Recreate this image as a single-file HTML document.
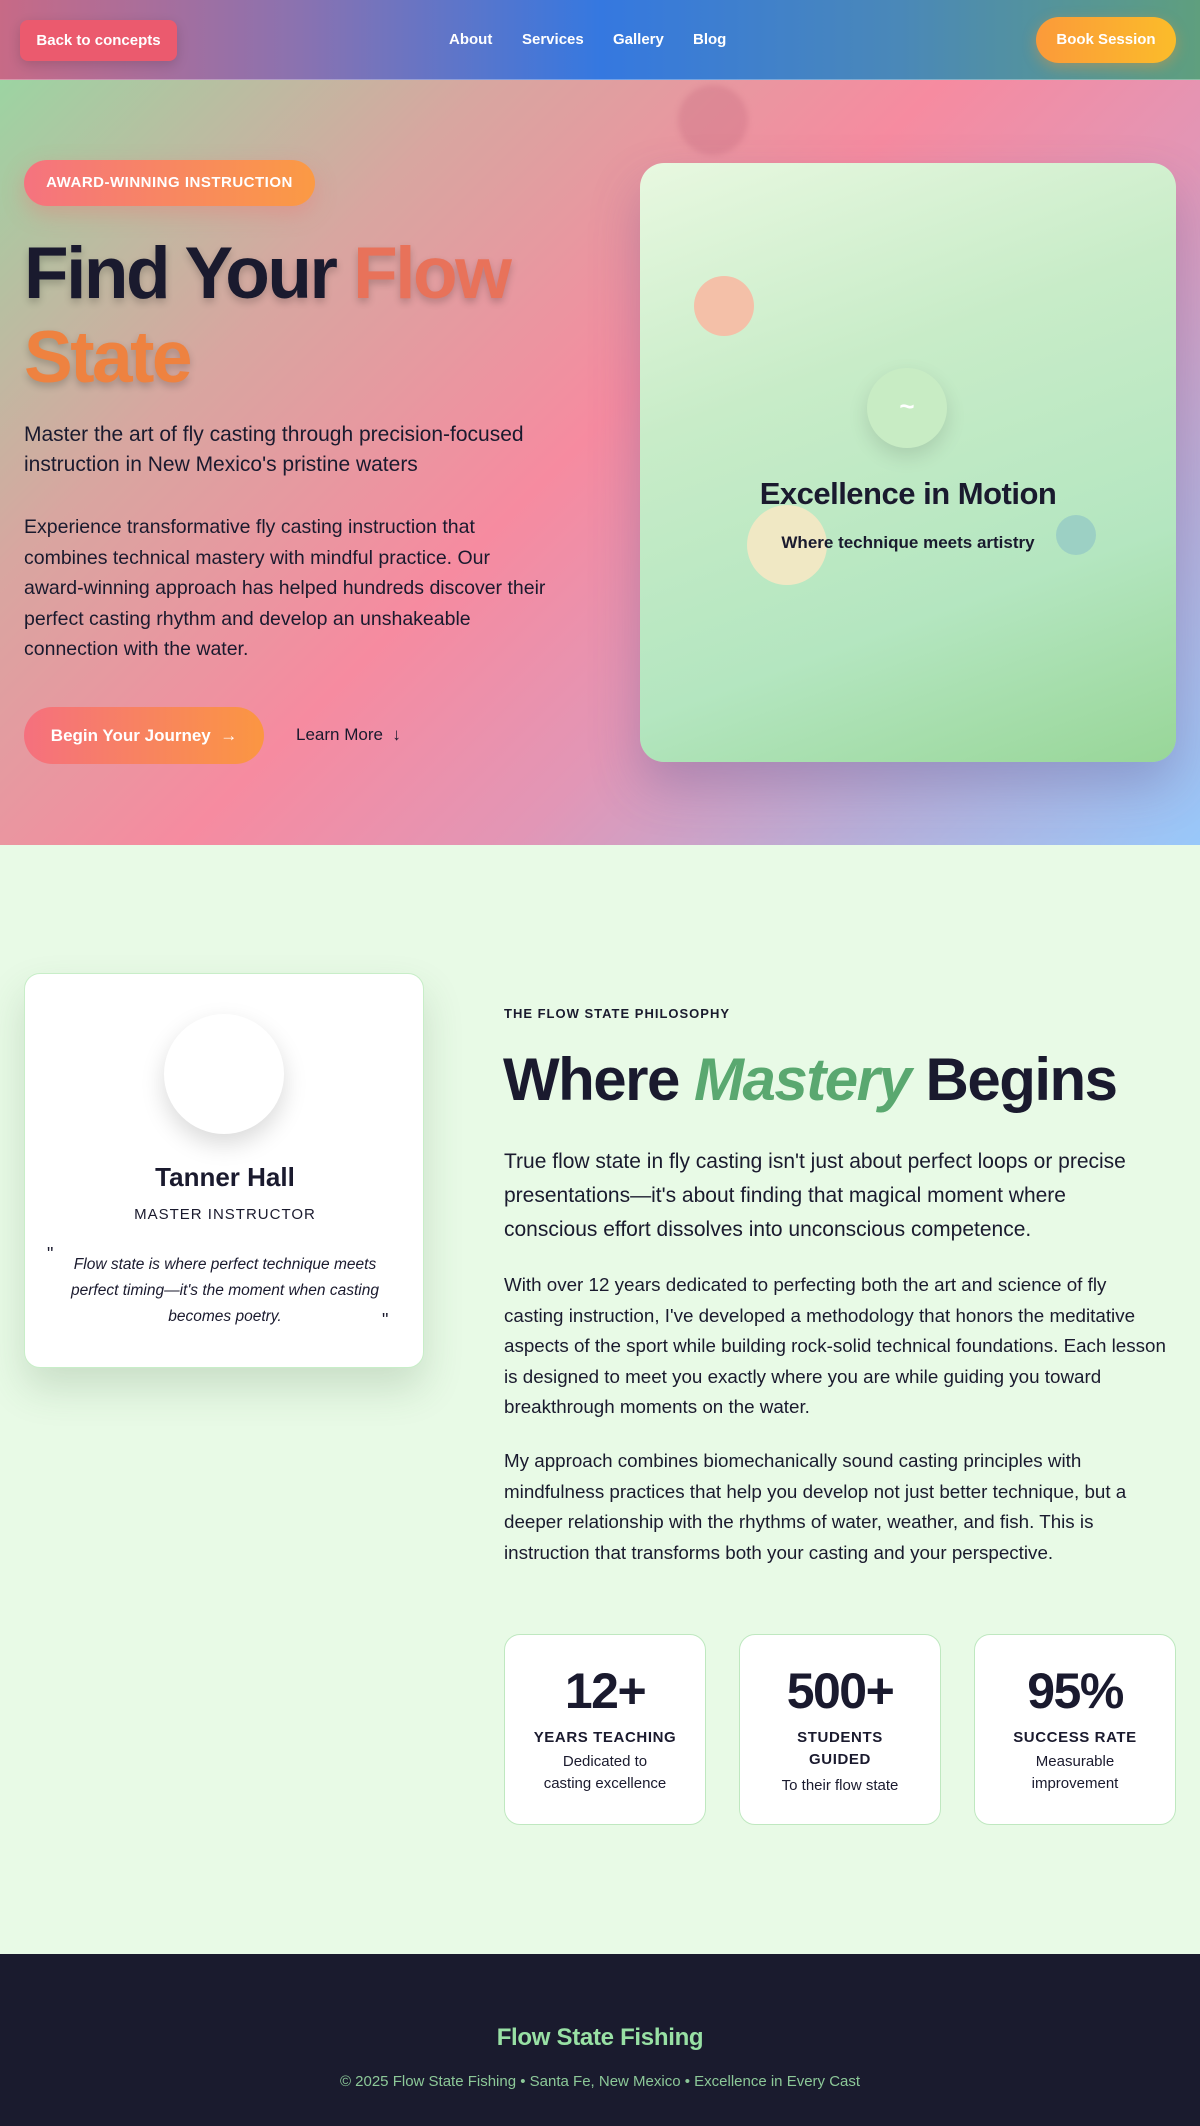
<!DOCTYPE html>
<html><head><meta charset="utf-8"><style>
*{margin:0;padding:0;box-sizing:border-box}
body{width:1200px;height:2126px;font-family:"Liberation Sans",sans-serif;color:#1a1a2e;overflow:hidden;background:#e8fae6}
.nav{position:absolute;left:0;top:0;width:1200px;height:80px;background:linear-gradient(90deg,#c76a86 0%,#8a72b0 25%,#3578e0 50%,#4a88b8 75%,#5f9f7e 100%);border-bottom:1px solid rgba(255,255,255,.3)}
.back{position:absolute;left:20px;top:20px;width:157px;height:41px;border-radius:8px;background:#eb5a6e;color:#fff;font-size:15px;font-weight:bold;line-height:41px;text-align:center;box-shadow:0 4px 12px rgba(0,0,0,.15)}
.links{position:absolute;top:31px;left:449px;font-size:15px;font-weight:bold;color:#fff}
.links span{position:absolute;white-space:nowrap}
.book{position:absolute;left:1036px;top:17px;width:140px;height:46px;border-radius:23px;background:linear-gradient(90deg,#fb9a3a,#fbbc2a);color:#fff;font-size:15px;font-weight:bold;line-height:46px;text-align:center;box-shadow:0 4px 14px rgba(251,150,50,.4)}
.hero{position:absolute;left:0;top:80px;width:1200px;height:765px;overflow:hidden;background:linear-gradient(135deg,#9cd4a2 0%,#d8a6a0 25%,#f68ba0 48%,#e296b6 65%,#b8aed8 82%,#98c8fa 100%)}
.badge{position:absolute;left:24px;top:80px;width:291px;height:46px;border-radius:23px;background:linear-gradient(90deg,#f5737f,#fb9a44);color:#fff;font-size:15px;font-weight:bold;letter-spacing:.5px;line-height:46px;text-align:center;box-shadow:0 8px 22px rgba(245,110,110,.35)}
h1{position:absolute;left:24px;top:152px;font-size:73px;line-height:84px;font-weight:bold;letter-spacing:-2.5px;color:#1a1a2e;text-shadow:0 4px 8px rgba(0,0,0,.2)}
h1 .a{color:#e8725a}h1 .b{color:#ee8240}
.sub{position:absolute;left:24px;top:340px;width:540px;font-size:21px;line-height:30px;color:#1a1a2e}
.para{position:absolute;left:24px;top:432px;width:525px;font-size:19.5px;line-height:30.6px;color:#1a1a2e}
.begin{position:absolute;left:24px;top:627px;width:240px;height:57px;border-radius:29px;background:linear-gradient(90deg,#f5707e,#fb9642);color:#fff;font-size:17px;font-weight:bold;line-height:57px;text-align:center}
.learn{position:absolute;left:296px;top:645px;font-size:17px;color:#1a1a2e}
.card{position:absolute;left:640px;top:83px;width:536px;height:599px;border-radius:24px;background:linear-gradient(160deg,#e8f8e0 0%,#c8ecc8 35%,#b4e6c0 70%,#98d698 100%);box-shadow:0 24px 50px rgba(80,80,140,.3)}
.dot{position:absolute;border-radius:50%}
.sec{position:absolute;left:0;top:845px;width:1200px;height:1109px;background:#e8fae6}
.pcard{position:absolute;left:24px;top:128px;width:400px;height:395px;background:#fff;border-radius:16px;border:1px solid #c8eec8;box-shadow:0 20px 40px rgba(60,100,60,.18)}
.stat{position:absolute;top:789px;width:202px;height:191px;background:#fff;border:1px solid #bfe8c0;border-radius:16px;text-align:center}
.stat .n{font-size:50px;font-weight:bold;letter-spacing:-1.5px;margin-top:28px;line-height:56px}
.stat .l{font-size:15px;font-weight:bold;letter-spacing:.6px;margin-top:8px;line-height:22px}
.stat .d{font-size:15px;line-height:22px;margin-top:2px}
.foot{position:absolute;left:0;top:1954px;width:1200px;height:172px;background:#1a1b2e;text-align:center}
</style></head><body>
<div class="nav">
<div class="back">Back to concepts</div>
<div class="links"><span style="left:0">About</span><span style="left:73px">Services</span><span style="left:164px">Gallery</span><span style="left:244px">Blog</span></div>
<div class="book">Book Session</div>
</div>
<div class="hero">
<div class="dot" style="left:678px;top:5px;width:70px;height:70px;background:rgba(200,110,130,.35);filter:blur(3px)"></div>
<div class="badge">AWARD-WINNING INSTRUCTION</div>
<h1>Find Your <span class="a">Flow</span><br><span class="b">State</span></h1>
<div class="sub">Master the art of fly casting through precision-focused instruction in New Mexico's pristine waters</div>
<div class="para">Experience transformative fly casting instruction that combines technical mastery with mindful practice. Our award-winning approach has helped hundreds discover their perfect casting rhythm and develop an unshakeable connection with the water.</div>
<div class="begin">Begin Your Journey &nbsp;→</div>
<div class="learn">Learn More &nbsp;↓</div>
<div class="card">
<div class="dot" style="left:54px;top:113px;width:60px;height:60px;background:#f4c0a8"></div>
<div class="dot" style="left:107px;top:342px;width:80px;height:80px;background:#f0e8c4"></div>
<div class="dot" style="left:416px;top:352px;width:40px;height:40px;background:#9cd0c4"></div>
<div class="dot" style="left:227px;top:205px;width:80px;height:80px;background:#c8ecc4;box-shadow:0 8px 20px rgba(0,0,0,.12);color:#fff;font-size:26px;font-weight:bold;text-align:center;line-height:76px">~</div>
<div style="position:absolute;left:0;width:536px;top:313px;text-align:center;font-size:31px;font-weight:bold;letter-spacing:-.5px">Excellence in Motion</div>
<div style="position:absolute;left:0;width:536px;top:370px;text-align:center;font-size:17px;font-weight:bold">Where technique meets artistry</div>
</div>
</div>
<div class="sec">
<div class="pcard">
<div class="dot" style="left:139px;top:40px;width:120px;height:120px;background:#fff;box-shadow:0 10px 24px rgba(0,0,0,.15)"></div>
<div style="position:absolute;left:0;width:400px;top:188px;text-align:center;font-size:26px;font-weight:bold">Tanner Hall</div>
<div style="position:absolute;left:0;width:400px;top:232px;text-align:center;font-size:15px;letter-spacing:1px">MASTER INSTRUCTOR</div>
<div style="position:absolute;left:22px;top:270px;font-size:18px">"</div>
<div style="position:absolute;left:40px;width:320px;top:278px;text-align:center;font-size:15.5px;line-height:26px;font-style:italic">Flow state is where perfect technique meets perfect timing—it's the moment when casting becomes poetry.</div>
<div style="position:absolute;left:357px;top:336px;font-size:18px">"</div>
</div>
<div style="position:absolute;left:504px;top:161px;font-size:13px;font-weight:bold;letter-spacing:1px">THE FLOW STATE PHILOSOPHY</div>
<div style="position:absolute;left:503px;top:197px;font-size:60px;font-weight:bold;letter-spacing:-1.5px;line-height:76px;white-space:nowrap">Where <i style="color:#5aa870">Mastery</i> Begins</div>
<div style="position:absolute;left:504px;top:300px;width:655px;font-size:21px;line-height:34px">True flow state in fly casting isn't just about perfect loops or precise presentations—it's about finding that magical moment where conscious effort dissolves into unconscious competence.</div>
<div style="position:absolute;left:504px;top:425px;width:665px;font-size:18.8px;line-height:30.6px">With over 12 years dedicated to perfecting both the art and science of fly casting instruction, I've developed a methodology that honors the meditative aspects of the sport while building rock-solid technical foundations. Each lesson is designed to meet you exactly where you are while guiding you toward breakthrough moments on the water.</div>
<div style="position:absolute;left:504px;top:601px;width:665px;font-size:18.8px;line-height:30.6px">My approach combines biomechanically sound casting principles with mindfulness practices that help you develop not just better technique, but a deeper relationship with the rhythms of water, weather, and fish. This is instruction that transforms both your casting and your perspective.</div>
<div class="stat" style="left:504px"><div class="n">12+</div><div class="l">YEARS TEACHING</div><div class="d">Dedicated to<br>casting excellence</div></div>
<div class="stat" style="left:739px"><div class="n">500+</div><div class="l">STUDENTS<br>GUIDED</div><div class="d" style="margin-top:4px">To their flow state</div></div>
<div class="stat" style="left:974px"><div class="n">95%</div><div class="l">SUCCESS RATE</div><div class="d">Measurable<br>improvement</div></div>
</div>
<div class="foot">
<div style="position:absolute;left:0;width:1200px;top:70px;font-size:24px;font-weight:bold;color:#98e0a4;letter-spacing:-.3px">Flow State Fishing</div>
<div style="position:absolute;left:0;width:1200px;top:119px;font-size:15px;color:#8cc898">© 2025 Flow State Fishing • Santa Fe, New Mexico • Excellence in Every Cast</div>
</div>
</body></html>
